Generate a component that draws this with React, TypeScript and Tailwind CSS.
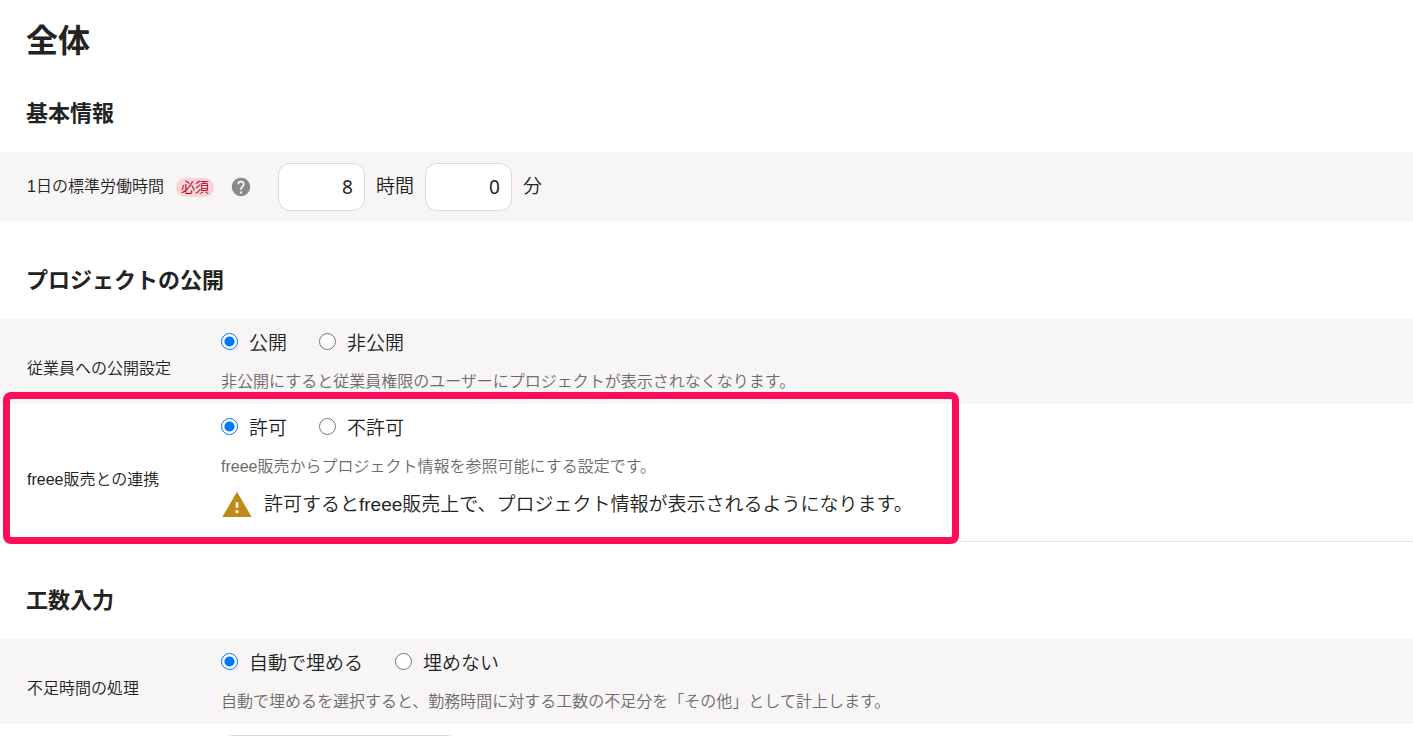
import { useState, type ReactNode } from 'react';
import { MdHelp, MdWarning } from 'react-icons/md';

interface RadioOption {
  value: string;
  label: string;
}

interface RadioGroupProps {
  name: string;
  options: RadioOption[];
  defaultValue: string;
}

function RadioGroup({ name, options, defaultValue }: RadioGroupProps) {
  const [selected, setSelected] = useState(defaultValue);

  return (
    <div className="flex gap-8">
      {options.map((option) => (
        <label key={option.value} className="flex gap-[11px] text-[19px] leading-7">
          <input
            type="radio"
            name={name}
            value={option.value}
            checked={selected === option.value}
            onChange={() => setSelected(option.value)}
            className="mt-[3px] size-[17px]"
          />
          {option.label}
        </label>
      ))}
    </div>
  );
}

function SectionTitle({ children }: { children: ReactNode }) {
  return <h2 className="px-[26px] pb-[22px] text-[22px] leading-8 font-bold">{children}</h2>;
}

interface SettingRowProps {
  label: string;
  children: ReactNode;
  className: string;
}

function SettingRow({ label, children, className }: SettingRowProps) {
  return (
    <div role="group" aria-label={label} className={`relative flex items-center px-[27px] pt-[11px] ${className}`}>
      <div className="w-[194px] shrink-0 pt-[3px] text-base">{label}</div>
      <div className="pb-[10px]">{children}</div>
    </div>
  );
}

function HelpText({ children }: { children: ReactNode }) {
  return <p className="mt-3 text-base text-[#6e6b66]">{children}</p>;
}

export default function App() {
  const [hours, setHours] = useState('8');
  const [minutes, setMinutes] = useState('0');

  return (
    <main className="h-screen overflow-hidden bg-white pt-[17px] font-['Liberation_Sans','Noto_Sans_CJK_JP',sans-serif] font-[350] text-[#232323]">
      <h1 className="px-[26px] text-[32px] leading-[48px] font-bold">全体</h1>

      <section className="pt-[33px]">
        <SectionTitle>基本情報</SectionTitle>
        <div className="flex items-center bg-[#f7f5f6] px-[27px] py-[11px]">
          <label htmlFor="hours" className="text-base">
            1日の標準労働時間
          </label>
          <span className="ml-3 rounded-full bg-[#fad2d7] px-[5px] text-sm leading-[19px] text-[#a30023]">必須</span>
          <button type="button" aria-label="ヘルプ" className="ml-4 text-[#8c8989]">
            <MdHelp className="size-[22px]" />
          </button>
          <div className="ml-[26px] flex items-center gap-[11px] text-[19px]">
            <input
              id="hours"
              type="text"
              inputMode="numeric"
              value={hours}
              onChange={(e) => setHours(e.target.value)}
              className="h-12 w-[87px] rounded-xl border border-[#d9d9d9] bg-white px-[11px] text-right font-['Noto_Sans',sans-serif] font-normal"
            />
            <label htmlFor="hours">時間</label>
            <input
              id="minutes"
              type="text"
              inputMode="numeric"
              value={minutes}
              onChange={(e) => setMinutes(e.target.value)}
              className="h-12 w-[87px] rounded-xl border border-[#d9d9d9] bg-white px-[11px] text-right font-['Noto_Sans',sans-serif] font-normal"
            />
            <label htmlFor="minutes">分</label>
          </div>
        </div>
      </section>

      <section className="pt-[43px]">
        <SectionTitle>プロジェクトの公開</SectionTitle>
        <SettingRow label="従業員への公開設定" className="bg-[#f7f5f6]">
          <RadioGroup
            name="visibility"
            defaultValue="public"
            options={[
              { value: 'public', label: '公開' },
              { value: 'private', label: '非公開' },
            ]}
          />
          <HelpText>非公開にすると従業員権限のユーザーにプロジェクトが表示されなくなります。</HelpText>
        </SettingRow>
        <SettingRow label="freee販売との連携" className="border-b border-[#e9e7e7]">
          <RadioGroup
            name="sales-link"
            defaultValue="allow"
            options={[
              { value: 'allow', label: '許可' },
              { value: 'deny', label: '不許可' },
            ]}
          />
          <HelpText>freee販売からプロジェクト情報を参照可能にする設定です。</HelpText>
          <div className="my-3 flex h-7 items-center gap-[11px] text-[19px]">
            <MdWarning className="size-8 shrink-0 text-[#be8c14]" />
            <p>許可するとfreee販売上で、プロジェクト情報が表示されるようになります。</p>
          </div>
          {/* highlight frame around the row */}
          <div className="pointer-events-none absolute -top-3 -bottom-[3px] left-[3px] w-[956px] rounded-lg border-[7px] border-[#ff0d58]" />
        </SettingRow>
      </section>

      <section className="pt-[43px]">
        <SectionTitle>工数入力</SectionTitle>
        <SettingRow label="不足時間の処理" className="bg-[#f7f5f6]">
          <RadioGroup
            name="shortage"
            defaultValue="auto"
            options={[
              { value: 'auto', label: '自動で埋める' },
              { value: 'none', label: '埋めない' },
            ]}
          />
          <HelpText>自動で埋めるを選択すると、勤務時間に対する工数の不足分を「その他」として計上します。</HelpText>
        </SettingRow>
        <div className="py-[11px] pl-[221px]">
          <input
            type="text"
            aria-label="工数入力の設定"
            className="block h-12 w-[238px] rounded-xl border border-[#d9d9d9] bg-white px-[11px] text-[19px]"
          />
        </div>
      </section>
    </main>
  );
}
